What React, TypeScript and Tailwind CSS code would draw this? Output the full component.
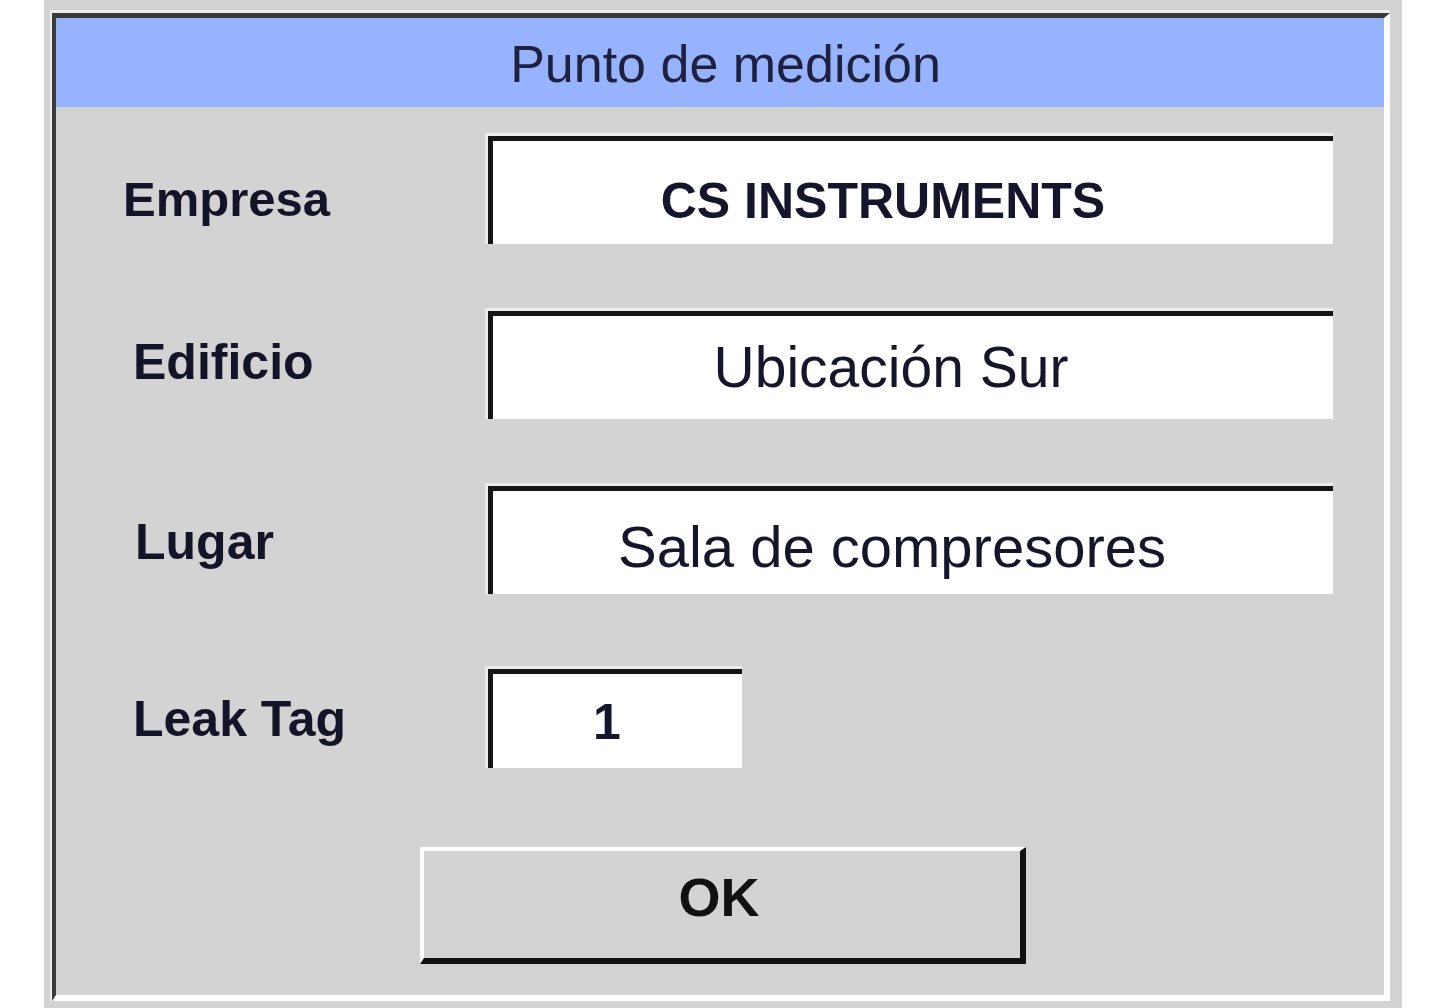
import React from "react";

const font = { fontFamily: '"Liberation Sans", Arial, sans-serif' };

function Field({
  width,
  height,
  text,
  bold,
  size,
  pt,
  pr,
}: {
  width: string;
  height: string;
  text: string;
  bold?: boolean;
  size: string;
  pt: string;
  pr: string;
}) {
  return (
    <div className={`${width} ${height} border-t-[3px] border-l-[3px] border-[#ececec] shrink-0`}>
      <div className="w-full h-full border-t-[5px] border-l-[5px] border-[#151515] bg-white">
        <div
          className={`w-full h-full flex items-center justify-center leading-none text-[#15152b] ${size} ${pt} ${pr} ${bold ? "font-bold" : "font-normal"}`}
        >
          {text}
        </div>
      </div>
    </div>
  );
}

export default function App() {
  return (
    <div className="w-full h-[1008px] bg-white overflow-hidden" style={font}>
      <div className="ml-[44px] w-[1358px] h-[1008px] bg-[#d3d3d3] pt-[10px] pl-[6px] pr-[12px] pb-[7px]">
        <div className="w-full h-full border-t-[3px] border-l-2 border-[#ececec]">
          <div className="w-full h-full border-t-[5px] border-l-4 border-[#3a3a3a] border-r-[6px] border-b-[6px] border-r-white border-b-white bg-[#d3d3d3] flex flex-col">
            <div className="h-[90px] bg-[#97b3fd] border-b border-[#ddd5c6] flex items-center justify-center shrink-0">
              <span className="text-[52px] leading-none text-[#1e2040] pt-[2px] pl-[11px]">Punto de medición</span>
            </div>
            <div className="flex flex-col pt-[25px]">
              <div className="flex items-center h-[111px]">
                <div className="w-[429px] pl-[67px] pt-[21px] text-[49px] font-bold leading-none text-[#141428]">Empresa</div>
                <Field width="w-[848px]" height="h-[111px]" text="CS INSTRUMENTS" bold size="text-[50px]" pt="pt-[17px]" pr="pr-[60px]" />
              </div>
              <div className="flex items-center h-[111px] mt-[64px]">
                <div className="w-[429px] pl-[77px] pb-[3px] text-[50px] font-bold leading-none text-[#141428]">Edificio</div>
                <Field width="w-[848px]" height="h-[111px]" text="Ubicación Sur" size="text-[57px]" pt="pt-[0px]" pr="pr-[44px]" />
              </div>
              <div className="flex items-center h-[111px] mt-[64px]">
                <div className="w-[429px] pl-[79px] pt-[7px] text-[50px] font-bold leading-none text-[#141428]">Lugar</div>
                <Field width="w-[848px]" height="h-[111px]" text="Sala de compresores" size="text-[58px]" pt="pt-[8px]" pr="pr-[42px]" />
              </div>
              <div className="flex items-center h-[102px] mt-[72px]">
                <div className="w-[429px] pl-[77px] pt-[4px] text-[50px] font-bold leading-none text-[#141428]">Leak Tag</div>
                <Field width="w-[257px]" height="h-[102px]" text="1" bold size="text-[50px]" pt="pt-[2px]" pr="pr-[21px]" />
              </div>
              <div className="flex mt-[79px]">
                <button className="ml-[364px] w-[606px] h-[117px] border-t-4 border-l-4 border-white border-r-[6px] border-b-[6px] border-r-[#111] border-b-[#111] bg-[#d3d3d3] flex items-center justify-center pb-[15px] pr-[6px] text-[54px] font-bold leading-none text-[#111]">
                  OK
                </button>
              </div>
            </div>
          </div>
        </div>
      </div>
    </div>
  );
}
